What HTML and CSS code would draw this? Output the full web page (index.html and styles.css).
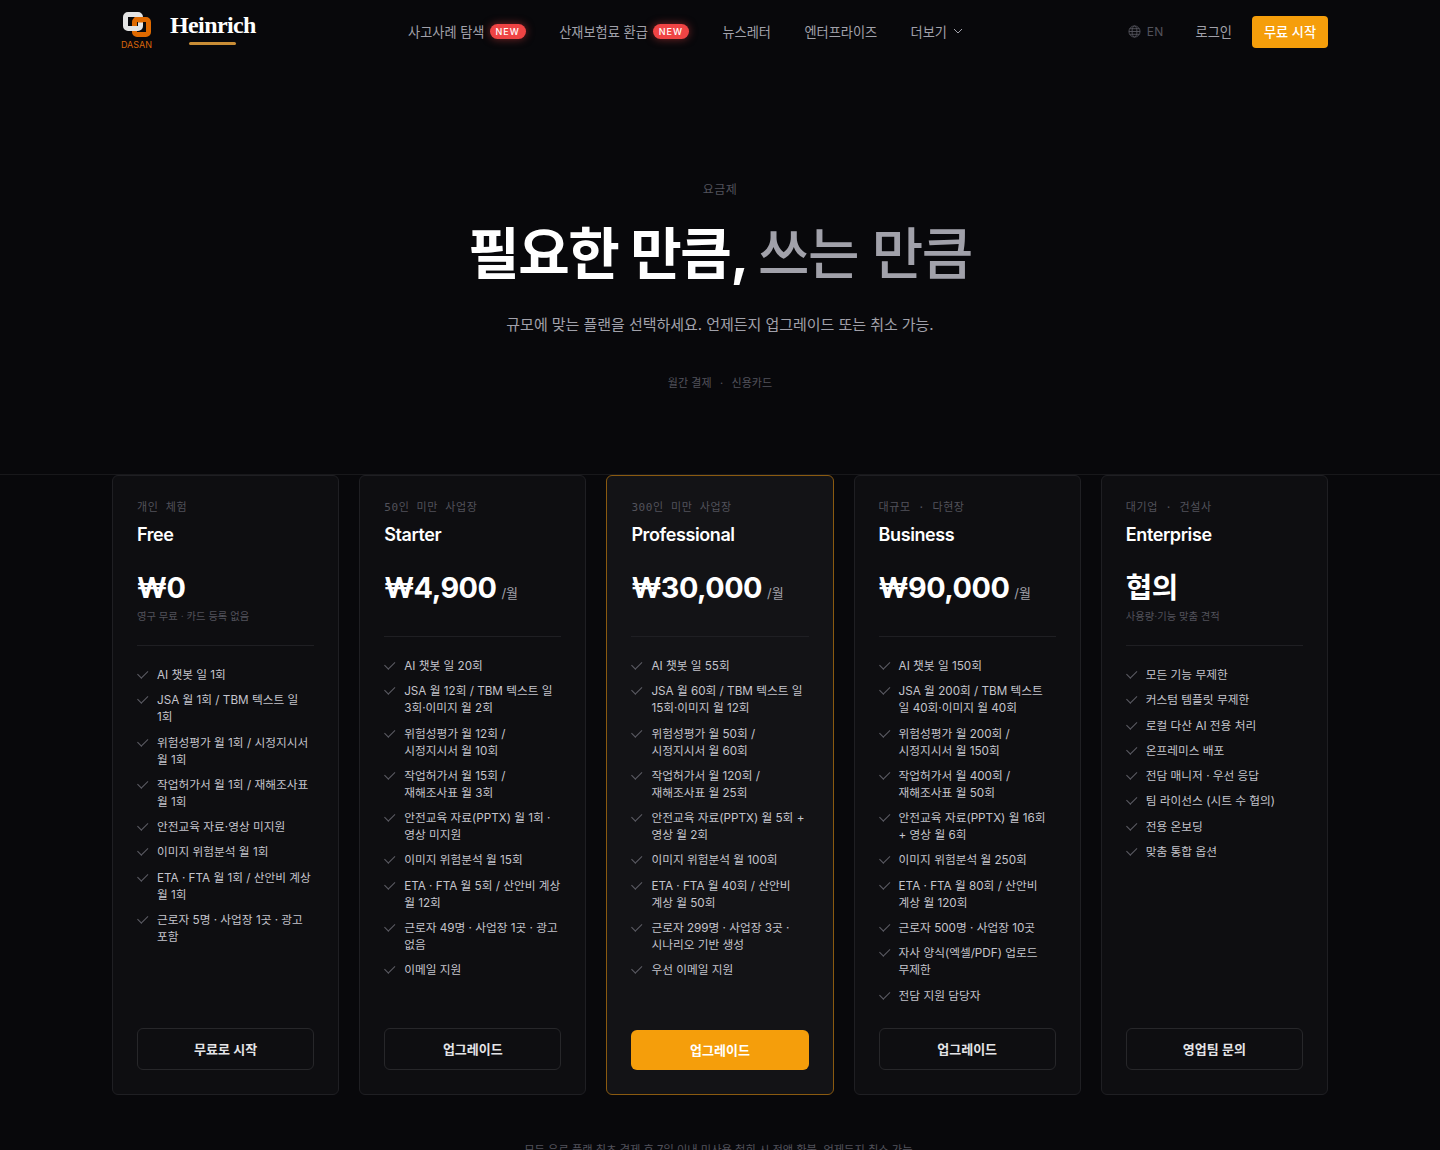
FILE: index.html
```html
<!DOCTYPE html>
<html lang="ko">

<head>
    <meta charset="UTF-8">
    <meta name="viewport" content="width=device-width, initial-scale=1.0">
    <title>요금제</title>
    <link rel="stylesheet" href="styles.css">
</head>

<body>
    <header class="nav">
        <a class="brand" href="#">
            <span class="logo">
                <svg width="30" height="27" viewBox="0 0 30 27" fill="none" stroke-width="5">
                    <rect x="12.5" y="8.5" width="14" height="15" rx="2.5" stroke="#e06a00"></rect>
                    <rect x="3.5" y="3.5" width="15" height="14" rx="2.5" stroke="#e4e4e4"></rect>
                    <path d="M12.5 8.5h6v3" stroke="#e06a00"></path>
                </svg>
                <span class="logo-text">DASAN</span>
            </span>
            <span class="brand-name">Heinrich</span>
        </a>
        <nav class="menu">
            <a href="#">사고사례 탐색 <span class="new">NEW</span></a>
            <a href="#">산재보험료 환급 <span class="new">NEW</span></a>
            <a href="#">뉴스레터</a>
            <a href="#">엔터프라이즈</a>
            <a href="#">더보기
                <svg width="12" height="12" viewBox="0 0 12 12"><path d="M2 4l4 4 4-4" fill="none" stroke="currentColor" stroke-width="1"></path></svg>
            </a>
        </nav>
        <div class="nav-right">
            <span class="lang">
                <svg width="13" height="13" viewBox="0 0 14 14" fill="none" stroke="currentColor" stroke-width="1"><circle cx="7" cy="7" r="6"></circle><ellipse cx="7" cy="7" rx="2.6" ry="6"></ellipse><path d="M1 7h12M1.8 4h10.4M1.8 10h10.4"></path></svg>
                EN
            </span>
            <a class="login" href="#">로그인</a>
            <a class="start" href="#">무료 시작</a>
        </div>
    </header>

    <section class="hero">
        <p class="eyebrow">요금제</p>
        <h1>필요한 만큼, <span>쓰는 만큼</span></h1>
        <p class="lead">규모에 맞는 플랜을 선택하세요. 언제든지 업그레이드 또는 취소 가능.</p>
        <p class="billing">월간 결제 <i>·</i> 신용카드</p>
    </section>

    <section class="plans">
        <div class="plans-grid">
            <!-- free -->
            <div class="plan">
                <p class="target">개인 체험</p>
                <h2>Free</h2>
                <div class="price">₩0</div>
                <p class="price-note">영구 무료 · 카드 등록 없음</p>
                <ul>
                    <li>AI 챗봇 일 1회</li>
                    <li>JSA 월 1회 / TBM 텍스트 일 1회</li>
                    <li>위험성평가 월 1회 / 시정지시서 월 1회</li>
                    <li>작업허가서 월 1회 / 재해조사표 월 1회</li>
                    <li>안전교육 자료·영상 미지원</li>
                    <li>이미지 위험분석 월 1회</li>
                    <li>ETA · FTA 월 1회 / 산안비 계상 월 1회</li>
                    <li>근로자 5명 · 사업장 1곳 · 광고 포함</li>
                </ul>
                <a class="btn" href="#">무료로 시작</a>
            </div>
            <!-- starter -->
            <div class="plan">
                <p class="target">50인 미만 사업장</p>
                <h2>Starter</h2>
                <div class="price">₩4,900 <small>/월</small></div>
                <ul class="no-note">
                    <li>AI 챗봇 일 20회</li>
                    <li>JSA 월 12회 / TBM 텍스트 일 3회·이미지 월 2회</li>
                    <li>위험성평가 월 12회 / 시정지시서 월 10회</li>
                    <li>작업허가서 월 15회 / 재해조사표 월 3회</li>
                    <li>안전교육 자료(PPTX) 월 1회 · 영상 미지원</li>
                    <li>이미지 위험분석 월 15회</li>
                    <li>ETA · FTA 월 5회 / 산안비 계상 월 12회</li>
                    <li>근로자 49명 · 사업장 1곳 · 광고 없음</li>
                    <li>이메일 지원</li>
                </ul>
                <a class="btn" href="#">업그레이드</a>
            </div>
            <!-- professional -->
            <div class="plan featured">
                <p class="target">300인 미만 사업장</p>
                <h2>Professional</h2>
                <div class="price">₩30,000 <small>/월</small></div>
                <ul class="no-note">
                    <li>AI 챗봇 일 55회</li>
                    <li>JSA 월 60회 / TBM 텍스트 일 15회·이미지 월 12회</li>
                    <li>위험성평가 월 50회 / 시정지시서 월 60회</li>
                    <li>작업허가서 월 120회 / 재해조사표 월 25회</li>
                    <li>안전교육 자료(PPTX) 월 5회 + 영상 월 2회</li>
                    <li>이미지 위험분석 월 100회</li>
                    <li>ETA · FTA 월 40회 / 산안비 계상 월 50회</li>
                    <li>근로자 299명 · 사업장 3곳 · 시나리오 기반 생성</li>
                    <li>우선 이메일 지원</li>
                </ul>
                <a class="btn btn-primary" href="#">업그레이드</a>
            </div>
            <!-- business -->
            <div class="plan">
                <p class="target">대규모 · 다현장</p>
                <h2>Business</h2>
                <div class="price">₩90,000 <small>/월</small></div>
                <ul class="no-note">
                    <li>AI 챗봇 일 150회</li>
                    <li>JSA 월 200회 / TBM 텍스트 일 40회·이미지 월 40회</li>
                    <li>위험성평가 월 200회 / 시정지시서 월 150회</li>
                    <li>작업허가서 월 400회 / 재해조사표 월 50회</li>
                    <li>안전교육 자료(PPTX) 월 16회 + 영상 월 6회</li>
                    <li>이미지 위험분석 월 250회</li>
                    <li>ETA · FTA 월 80회 / 산안비 계상 월 120회</li>
                    <li>근로자 500명 · 사업장 10곳</li>
                    <li>자사 양식(엑셀/PDF) 업로드 무제한</li>
                    <li>전담 지원 담당자</li>
                </ul>
                <a class="btn" href="#">업그레이드</a>
            </div>
            <!-- enterprise -->
            <div class="plan">
                <p class="target">대기업 · 건설사</p>
                <h2>Enterprise</h2>
                <div class="price">협의</div>
                <p class="price-note">사용량·기능 맞춤 견적</p>
                <ul>
                    <li>모든 기능 무제한</li>
                    <li>커스텀 템플릿 무제한</li>
                    <li>로컬 다산 AI 전용 처리</li>
                    <li>온프레미스 배포</li>
                    <li>전담 매니저 · 우선 응답</li>
                    <li>팀 라이선스 (시트 수 협의)</li>
                    <li>전용 온보딩</li>
                    <li>맞춤 통합 옵션</li>
                </ul>
                <a class="btn" href="#">영업팀 문의</a>
            </div>
        </div>
        <p class="foot-note">모든 유료 플랜 최초 결제 후 7일 이내 미사용 철회 시 전액 환불. 언제든지 취소 가능.</p>
    </section>
</body>

</html>
```

FILE: styles.css
```css
* {
    box-sizing: border-box;
}

body {
    margin: 0;
    background-color: #08080b;
    color: #fff;
    font-family: Inter, "Noto Sans CJK KR", sans-serif;
    overflow-x: hidden;
}

a {
    color: inherit;
    text-decoration: none;
}

p,
h1,
h2,
ul {
    margin: 0;
    padding: 0;
}

/* nav */
.nav {
    width: 1216px;
    height: 64px;
    margin: 0 auto;
    display: flex;
    align-items: center;
}

.brand {
    display: flex;
    align-items: flex-start;
    width: 220px;
    height: 64px;
    padding: 11px 0 0 9px;
}

.logo {
    display: flex;
    flex-direction: column;
    align-items: center;
    width: 31px;
}

.logo-text {
    font-size: 9px;
    line-height: 10px;
    color: #d9650a;
    margin-top: 2px;
}

.brand-name {
    position: relative;
    margin-left: 18px;
    font-family: "Liberation Serif", serif;
    font-weight: 700;
    font-size: 24px;
    line-height: 28px;
    letter-spacing: -0.6px;
}

.brand-name::after {
    content: "";
    position: absolute;
    left: 19px;
    top: 31px;
    width: 47px;
    height: 3px;
    border-radius: 2px;
    background-color: #c98d36;
}

.menu {
    display: flex;
    align-items: center;
    gap: 33.4px;
    margin-left: 76px;
    padding-bottom: 2px;
    font-size: 13.2px;
    color: #a1a1aa;
}

.menu a {
    display: flex;
    align-items: center;
    gap: 5px;
}

.new {
    height: 15px;
    padding: 0 6px;
    border-radius: 8px;
    background-color: #ef4444;
    box-shadow: 0 0 8px rgba(239, 68, 68, 0.5);
    color: #fff;
    font-size: 9px;
    font-weight: 500;
    letter-spacing: 1px;
    line-height: 15px;
}

.nav-right {
    display: flex;
    align-items: center;
    margin-left: auto;
    padding-bottom: 1px;
    font-size: 13.2px;
    color: #a1a1aa;
}

.lang {
    display: flex;
    align-items: center;
    gap: 6px;
    font-size: 12px;
    letter-spacing: 0.3px;
    color: #52525b;
    margin-right: 32px;
}

.start {
    width: 76px;
    margin-left: 20px;
    height: 32px;
    line-height: 32px;
    text-align: center;
    border-radius: 4px;
    background-color: #f59e0b;
    color: #fff;
    font-weight: 500;
}

/* hero */
.hero {
    height: 410px;
    padding-top: 117px;
    text-align: center;
}

.eyebrow {
    font-size: 12px;
    line-height: 18px;
    letter-spacing: 0.5px;
    color: #52525b;
}

h1 {
    margin-top: 22px;
    font-size: 56px;
    line-height: 66px;
    font-weight: 700;
    letter-spacing: -1.4px;
}

h1 span {
    color: #a1a1aa;
    font-weight: 500;
}

.lead {
    margin-top: 26px;
    font-size: 15px;
    line-height: 24px;
    letter-spacing: -0.04px;
    color: #a1a1aa;
}

.billing {
    margin-top: 37px;
    font-size: 11px;
    line-height: 18px;
    letter-spacing: 0.1px;
    color: #52525b;
}

.billing i {
    font-style: normal;
    margin: 0 5px;
}

/* plans */
.plans {
    border-top: 1px solid #18181b;
}

.plans-grid {
    width: 1216px;
    margin: 0 auto;
    display: grid;
    grid-template-columns: repeat(5, 1fr);
    gap: 20px;
}

.plan {
    height: 620px;
    display: flex;
    flex-direction: column;
    padding: 24px;
    border: 1px solid #1f1f23;
    border-radius: 6px;
    background-color: #0e0e11;
}

.plan.featured {
    border-color: #8a5a10;
    background-color: #131316;
}

.target {
    font-family: "DejaVu Sans Mono", "Noto Sans CJK KR", monospace;
    font-size: 11px;
    line-height: 16px;
    letter-spacing: 0.6px;
    color: #52525b;
}

h2 {
    margin-top: 7px;
    font-size: 18px;
    line-height: 24px;
    font-weight: 600;
    letter-spacing: -0.4px;
}

.price {
    display: flex;
    align-items: baseline;
    gap: 5px;
    margin-top: 23px;
    font-size: 28.8px;
    line-height: 36px;
    font-weight: 700;
    letter-spacing: -0.5px;
}

.price small {
    font-size: 13px;
    font-weight: 400;
    letter-spacing: 0;
    color: #a1a1aa;
}

.price-note {
    margin-top: 2px;
    font-size: 10.3px;
    line-height: 16px;
    color: #52525b;
}

.plan ul {
    flex: 1;
    list-style: none;
    margin-top: 21px;
    padding-top: 21px;
    border-top: 1px solid #1f1f23;
}

.plan ul.no-note {
    margin-top: 25px;
}

.plan li {
    position: relative;
    padding-left: 20px;
    margin-bottom: 8.3px;
    font-size: 11.7px;
    line-height: 17px;
    word-break: keep-all;
    color: #c4c4cc;
}

.plan li::before {
    content: "";
    position: absolute;
    left: 3px;
    top: 1px;
    width: 4.5px;
    height: 8.5px;
    border-right: 1px solid #5c5c64;
    border-bottom: 1px solid #5c5c64;
    transform: rotate(45deg);
}

.btn {
    display: block;
    height: 42px;
    line-height: 40px;
    text-align: center;
    border: 1px solid #27272a;
    border-radius: 6px;
    font-size: 13px;
    font-weight: 600;
    color: #e4e4e7;
}

.btn-primary {
    height: 40px;
    margin-top: 2px;
    border: none;
    background-color: #f59e0b;
    color: #fff;
}

.foot-note {
    margin-top: 47px;
    text-align: center;
    font-size: 11.25px;
    line-height: 16px;
    color: #52525b;
}
```
